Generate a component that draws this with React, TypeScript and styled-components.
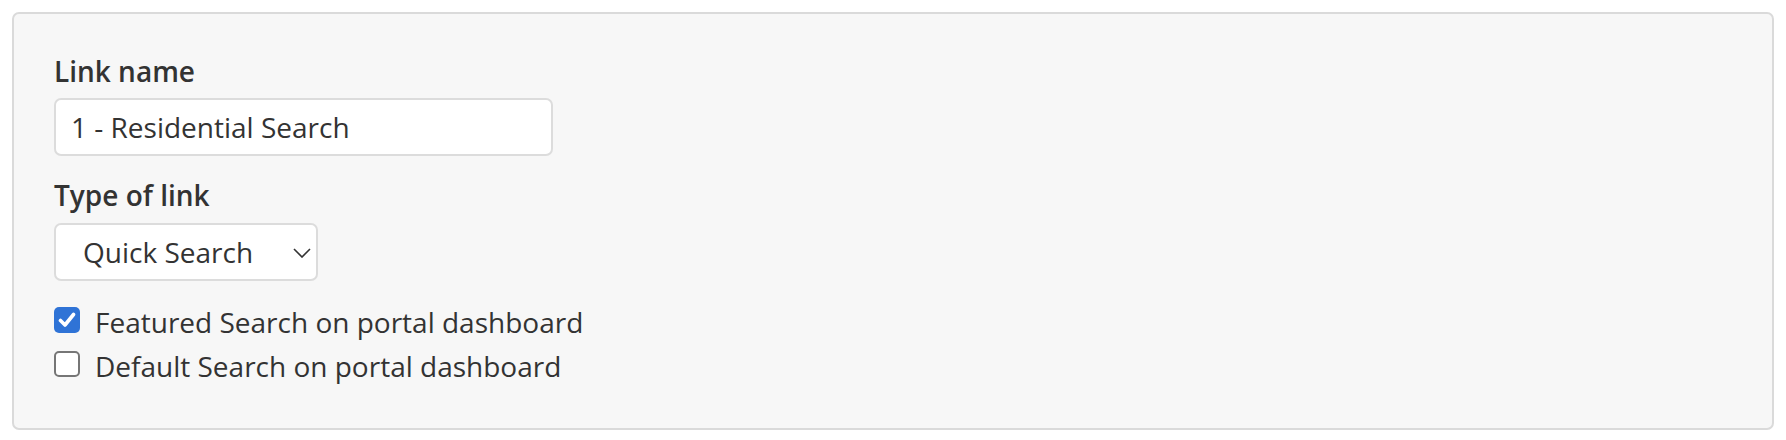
import React from "react";
import styled, { createGlobalStyle } from "styled-components";

const GlobalStyle = createGlobalStyle`
  html, body { margin: 0; padding: 0; background: #ffffff; }
  body { font-family: "Open Sans", "Noto Sans", sans-serif; color: #333333; }
`;

const Page = styled.div`
  padding: 12px;
`;

const Panel = styled.section`
  box-sizing: border-box;
  width: 1762px;
  height: 418px;
  background: #f7f7f7;
  border: 2px solid #dadada;
  border-radius: 7px;
  padding: 39px 40px 37px 40px;
  display: flex;
  flex-direction: column;
`;

const Field = styled.div<{ $gap: number }>`
  display: flex;
  flex-direction: column;
  align-items: flex-start;
  gap: ${(p) => p.$gap}px;
  margin-bottom: 21px;
`;

const Label = styled.label`
  font-size: 28px;
  font-weight: 600;
  line-height: 37px;
  color: #333333;
`;

const TextInput = styled.input`
  box-sizing: border-box;
  width: 499px;
  height: 58px;
  background: #ffffff;
  border: 2px solid #dcdcdc;
  border-radius: 7px;
  padding: 0 15px;
  font-family: "Open Sans", "Noto Sans", sans-serif;
  font-size: 28px;
  color: #333333;
  outline: none;
`;

const SelectWrap = styled.div`
  position: relative;
  width: 264px;
  height: 58px;
`;

const Select = styled.select`
  box-sizing: border-box;
  width: 100%;
  height: 100%;
  appearance: none;
  -webkit-appearance: none;
  background: #ffffff;
  border: 2px solid #dcdcdc;
  border-radius: 7px;
  padding: 0 40px 0 27px;
  font-family: "Open Sans", "Noto Sans", sans-serif;
  font-size: 28px;
  color: #333333;
  outline: none;
`;

const Chevron = styled.svg`
  position: absolute;
  left: 239px;
  top: 25px;
  width: 18px;
  height: 10px;
  pointer-events: none;
`;

const Checks = styled.div`
  display: flex;
  flex-direction: column;
  margin-top: -2px;
`;

const CheckRow = styled.label`
  display: flex;
  align-items: center;
  gap: 15px;
  height: 44px;
  font-size: 28px;
  line-height: 44px;
  color: #333333;
`;

const Box = styled.span<{ $checked: boolean }>`
  box-sizing: border-box;
  width: 26px;
  height: 26px;
  margin-top: -5px;
  border-radius: 5px;
  flex: none;
  display: flex;
  align-items: center;
  justify-content: center;
  background: ${(p) => (p.$checked ? "#2f73d6" : "#ffffff")};
  border: ${(p) => (p.$checked ? "none" : "2px solid #767676")};
`;

function CheckItem({ checked, children }: { checked: boolean; children: React.ReactNode }) {
  return (
    <CheckRow>
      <Box $checked={checked}>
        {checked && (
          <svg width="18" height="16" viewBox="0 0 18 16">
            <path d="M2.5 8.5 L7 13 L15.5 2.5" fill="none" stroke="#ffffff" strokeWidth="3.6" strokeLinecap="round" strokeLinejoin="round" />
          </svg>
        )}
      </Box>
      {children}
    </CheckRow>
  );
}

export default function App() {
  return (
    <>
      <GlobalStyle />
      <Page>
        <Panel>
          <Field $gap={8}>
            <Label>Link name</Label>
            <TextInput defaultValue="1 - Residential Search" />
          </Field>
          <Field $gap={9}>
            <Label>Type of link</Label>
            <SelectWrap>
              <Select defaultValue="quick">
                <option value="quick">Quick Search</option>
              </Select>
              <Chevron viewBox="0 0 18 10">
                <path d="M1 1 L9 9 L17 1" fill="none" stroke="#333333" strokeWidth="1.6" />
              </Chevron>
            </SelectWrap>
          </Field>
          <Checks>
            <CheckItem checked>Featured Search on portal dashboard</CheckItem>
            <CheckItem checked={false}>Default Search on portal dashboard</CheckItem>
          </Checks>
        </Panel>
      </Page>
    </>
  );
}
